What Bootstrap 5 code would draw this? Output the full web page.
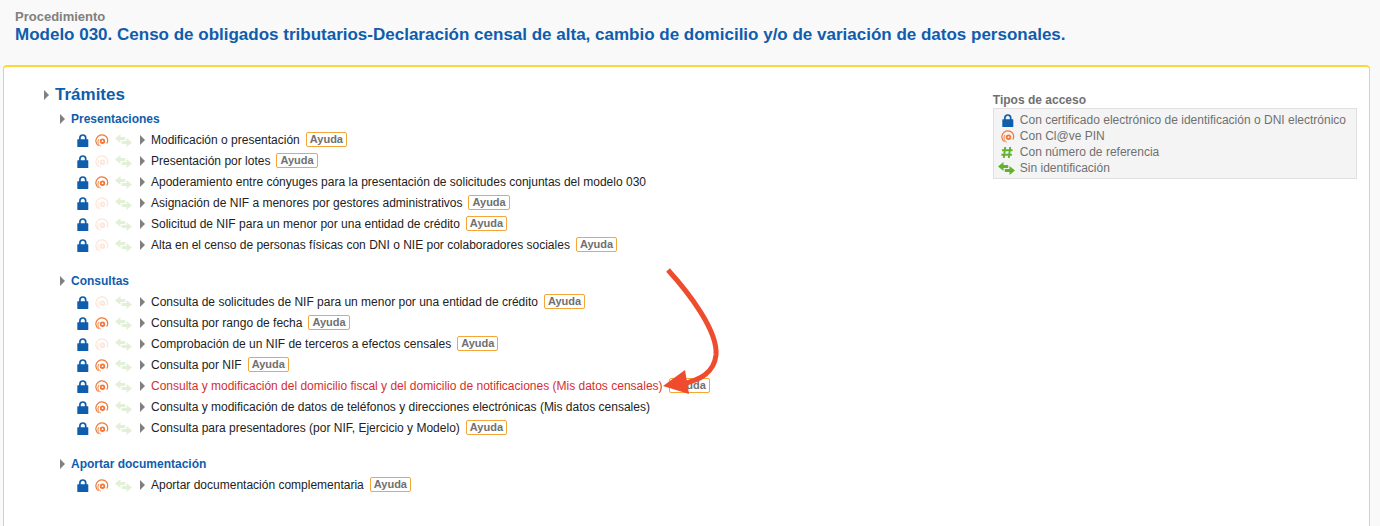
<!DOCTYPE html>
<html lang="es">
<head>
<meta charset="utf-8">
<meta name="viewport" content="width=device-width, initial-scale=1">
<title>Modelo 030</title>
<link href="https://cdn.jsdelivr.net/npm/bootstrap@5.3.0/dist/css/bootstrap.min.css" rel="stylesheet">
<style>
body { font-family: "Liberation Sans", Arial, sans-serif; font-size: 12px; line-height: 16px; color: #222; background: #f9f9f9; }
a { text-decoration: none; color: inherit; }
a:hover { text-decoration: underline; }
svg { display: block; flex: none; }
.page-head { padding: 9px 15px 21px; }
.kicker { font-size: 13px; line-height: 16px; color: #808080; }
.page-title { font-size: 17px; line-height: 19px; color: #0f5dad; }
.panel { margin: 0 10px 0 3px; padding: 16px 12px 24px 40px; background: #fff; border: 1px solid #fdd835; border-top-width: 2px; border-bottom: 0; border-radius: 4px 4px 0 0; min-height: calc(100vh - 65px); }
.marker::before { content: ""; flex: none; width: 0; height: 0; border: solid transparent; border-width: 5px 0 5px 5px; border-left-color: #808080; margin-right: 6px; }
.tramites-title { font-size: 17px; line-height: 24px; color: #0f5dad; margin-bottom: 4px; }
.group { padding-left: 16px; margin-bottom: 18px; }
.group-title { font-size: 12px; line-height: 16px; color: #0f5dad; margin-bottom: 2px; }
.entry { height: 21px; padding-left: 17px; }
.access { width: 63px; padding-top: 2px; }
.access .pin { margin: 0 6px; }
.off { opacity: .18; }
.help { font-size: 11px; line-height: 13px; font-weight: bold; color: #707070; background: #fff; border: 1px solid #f5a638; border-radius: 2px; padding: 0 3px; margin-left: 6px; }
.help-wrap { position: relative; display: flex; }
.pointer { position: absolute; left: -1px; top: -113px; pointer-events: none; }
.chosen { color: #d32f2f; }
.legend-box { color: #707070; margin-top: 9px; }
.legend-list { background: #f4f4f4; border: 1px solid #e0e0e0; padding: 3px 10px 2px 4px; }
.legend-list .icon-cell { width: 22px; padding-top: 1px; }
.legend-list .narrow { margin-left: 3px; }
.legend-title { font-size: 12px; line-height: 16px; margin: 0; }
</style>
</head>
<body>
<svg width="0" height="0" class="position-absolute" aria-hidden="true">
  <symbol id="lock" viewBox="0 0 12 13"><path d="M2.900 6V3.900a2.900 2.900 0 0 1 5.800 0V6" fill="none" stroke="#0f5dad" stroke-width="1.700"/><rect x=".3" y="5.200" width="11" height="7.800" rx=".5" fill="#0f5dad"/></symbol>
  <symbol id="clave" viewBox="0 0 14 13"><g fill="none" stroke="#f07838"><circle cx="7.500" cy="7.200" r="1.800" stroke-width="1.800"/><path d="M3.600 11.800C.2 9.800-.2 4.800 3.200 2.200 7-.6 12.500 1.400 12.700 6.600c0 1.300-.4 2.200-1 2.900" stroke-width="1.200"/><path d="M5.600 12C2.700 10.700 2.200 7 4.100 5" stroke-width="1"/></g></symbol>
  <symbol id="swap" viewBox="0 0 17 13"><path d="M0 4.500 5.500 0v2.900h4.700v3.200H5.500V9zM17 8.500 11.500 13v-2.900H6.800V6.900h4.700V4z" fill="#62b22f"/></symbol>
  <symbol id="hash" viewBox="0 0 12 13"><path d="M4.200 1 2.800 12M9.200 1 7.800 12M1 4.300h10.600M.3 8.700h10.600" fill="none" stroke="#62b22f" stroke-width="1.900"/></symbol>
</svg>

<header class="page-head">
  <div class="kicker fw-bold">Procedimiento</div>
  <h1 class="page-title fw-bold m-0">Modelo 030. Censo de obligados tributarios-Declaración censal de alta, cambio de domicilio y/o de variación de datos personales.</h1>
</header>

<main class="panel d-flex justify-content-between align-items-start">
  <section class="flex-grow-1">
    <h2 class="tramites-title marker fw-bold d-flex align-items-center">Trámites</h2>
    <div id="groups"></div>
  </section>
  <aside class="legend-box flex-shrink-0">
    <h2 class="legend-title fw-bold">Tipos de acceso</h2>
    <ul class="legend-list list-unstyled m-0">
      <li class="d-flex align-items-center"><span class="icon-cell"><svg class="mx-1" width="12" height="13"><use href="#lock"/></svg></span>Con certificado electrónico de identificación o DNI electrónico</li>
      <li class="d-flex align-items-center"><span class="icon-cell"><svg class="narrow" width="14" height="13"><use href="#clave"/></svg></span>Con Cl@ve PIN</li>
      <li class="d-flex align-items-center"><span class="icon-cell"><svg class="narrow" width="12" height="13"><use href="#hash"/></svg></span>Con número de referencia</li>
      <li class="d-flex align-items-center"><span class="icon-cell"><svg width="17" height="13"><use href="#swap"/></svg></span>Sin identificación</li>
    </ul>
  </aside>
</main>

<script>
// Each entry: [text, Cl@ve PIN available, help button, highlighted]
const groups = [
  ["Presentaciones", [
    ["Modificación o presentación", 1, 1],
    ["Presentación por lotes", 0, 1],
    ["Apoderamiento entre cónyuges para la presentación de solicitudes conjuntas del modelo 030", 1, 0],
    ["Asignación de NIF a menores por gestores administrativos", 0, 1],
    ["Solicitud de NIF para un menor por una entidad de crédito", 0, 1],
    ["Alta en el censo de personas físicas con DNI o NIE por colaboradores sociales", 0, 1]]],
  ["Consultas", [
    ["Consulta de solicitudes de NIF para un menor por una entidad de crédito", 0, 1],
    ["Consulta por rango de fecha", 1, 1],
    ["Comprobación de un NIF de terceros a efectos censales", 0, 1],
    ["Consulta por NIF", 1, 1],
    ["Consulta y modificación del domicilio fiscal y del domicilio de notificaciones (Mis datos censales)", 1, 1, 1],
    ["Consulta y modificación de datos de teléfonos y direcciones electrónicas (Mis datos censales)", 1, 0],
    ["Consulta para presentadores (por NIF, Ejercicio y Modelo)", 1, 1]]],
  ["Aportar documentación", [
    ["Aportar documentación complementaria", 1, 1]]]
];
const pointer = `<svg class="pointer" width="60" height="132" viewBox="0 0 60 132" aria-hidden="true"><path d="M6 5C27 28 56 66 54 90C52 108 38 115 20 119" fill="none" stroke="#ee4b2f" stroke-width="5"/><path d="M1 121 23 105 27 129z" fill="#ee4b2f"/></svg>`;
document.getElementById("groups").innerHTML = groups.map(([title, entries]) => `
  <section class="group">
    <h3 class="group-title marker fw-bold d-flex align-items-center">${title}</h3>
    <ul class="list-unstyled m-0">${entries.map(([text, pin, help, chosen]) => `
      <li class="entry d-flex align-items-center">
        <span class="access d-flex align-items-center"><svg width="12" height="13"><use href="#lock"/></svg><svg width="14" height="13" class="pin${pin ? "" : " off"}"><use href="#clave"/></svg><svg width="17" height="13" class="off"><use href="#swap"/></svg></span>
        <span class="marker d-flex align-items-center"><a href="#"${chosen ? ' class="chosen"' : ""}>${text}</a></span>
        ${help ? `<span class="help-wrap"><button type="button" class="help">Ayuda</button>${chosen ? pointer : ""}</span>` : ""}
      </li>`).join("")}</ul>
  </section>`).join("");
</script>
<script src="https://cdn.jsdelivr.net/npm/bootstrap@5.3.0/dist/js/bootstrap.bundle.min.js"></script>
</body>
</html>
